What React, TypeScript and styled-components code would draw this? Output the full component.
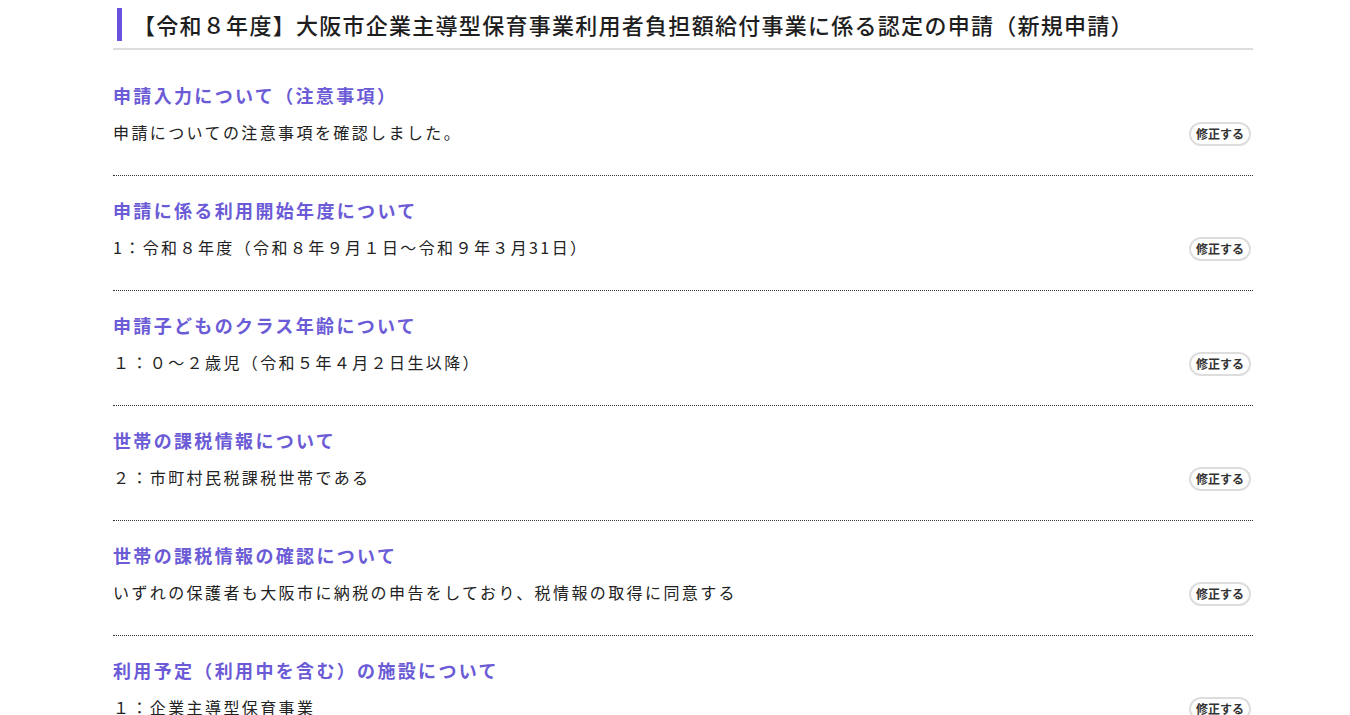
import React from 'react'
import styled, { createGlobalStyle } from 'styled-components'

const GlobalStyle = createGlobalStyle`
  html, body {
    margin: 0;
    padding: 0;
    background: #fff;
  }
  body {
    font-family: 'Noto Sans CJK JP', 'Noto Sans', sans-serif;
    color: #222;
  }
`

const Page = styled.div`
  width: 1140px;
  margin-left: 113px;
`

const Heading = styled.div`
  padding: 8px 0 7px 4px;
  border-bottom: 2px solid #dddddd;
`

const HeadingTitle = styled.h1`
  margin: 0;
  padding-left: 11px;
  border-left: 5px solid #6a52e0;
  font-size: 22px;
  line-height: 33px;
  font-weight: 500;
  letter-spacing: 0.058em;
  color: #1e1e1e;
  white-space: nowrap;
`

const List = styled.div`
  margin-top: 11px;
`

const Section = styled.section`
  padding: 21px 0 29px;
  border-bottom: 1px dotted #333;
`

const SectionTitle = styled.h2`
  margin: 0 0 10px;
  font-size: 18px;
  line-height: 26px;
  font-weight: 700;
  letter-spacing: 0.13em;
  color: #6b5bd6;
`

const Row = styled.div`
  display: flex;
  align-items: center;
  justify-content: space-between;
  height: 28px;
`

const Answer = styled.p`
  margin: 0;
  font-size: 16px;
  line-height: 26px;
  letter-spacing: 0.15em;
  color: #222;
`

const EditButton = styled.button`
  margin: 4px 2px 0 0;
  height: 24px;
  padding: 0 5px;
  border: 2px solid #dddddd;
  border-radius: 12px;
  background: #fff;
  font-family: inherit;
  font-size: 12px;
  font-weight: 700;
  line-height: 20px;
  color: #333;
  cursor: pointer;
  white-space: nowrap;
`

const items = [
  {
    title: '申請入力について（注意事項）',
    answer: '申請についての注意事項を確認しました。',
  },
  {
    title: '申請に係る利用開始年度について',
    answer: '1：令和８年度（令和８年９月１日～令和９年３月31日）',
  },
  {
    title: '申請子どものクラス年齢について',
    answer: '１：０～２歳児（令和５年４月２日生以降）',
  },
  {
    title: '世帯の課税情報について',
    answer: '２：市町村民税課税世帯である',
  },
  {
    title: '世帯の課税情報の確認について',
    answer: 'いずれの保護者も大阪市に納税の申告をしており、税情報の取得に同意する',
  },
  {
    title: '利用予定（利用中を含む）の施設について',
    answer: '１：企業主導型保育事業',
  },
]

const App = () => {
  return (
    <>
      <GlobalStyle />
      <Page>
        <Heading>
          <HeadingTitle>
            【令和８年度】大阪市企業主導型保育事業利用者負担額給付事業に係る認定の申請（新規申請）
          </HeadingTitle>
        </Heading>
        <List>
          {items.map((item, key) => (
            <Section key={key}>
              <SectionTitle>{item.title}</SectionTitle>
              <Row>
                <Answer>{item.answer}</Answer>
                <EditButton type="button">修正する</EditButton>
              </Row>
            </Section>
          ))}
        </List>
      </Page>
    </>
  )
}

export default App
